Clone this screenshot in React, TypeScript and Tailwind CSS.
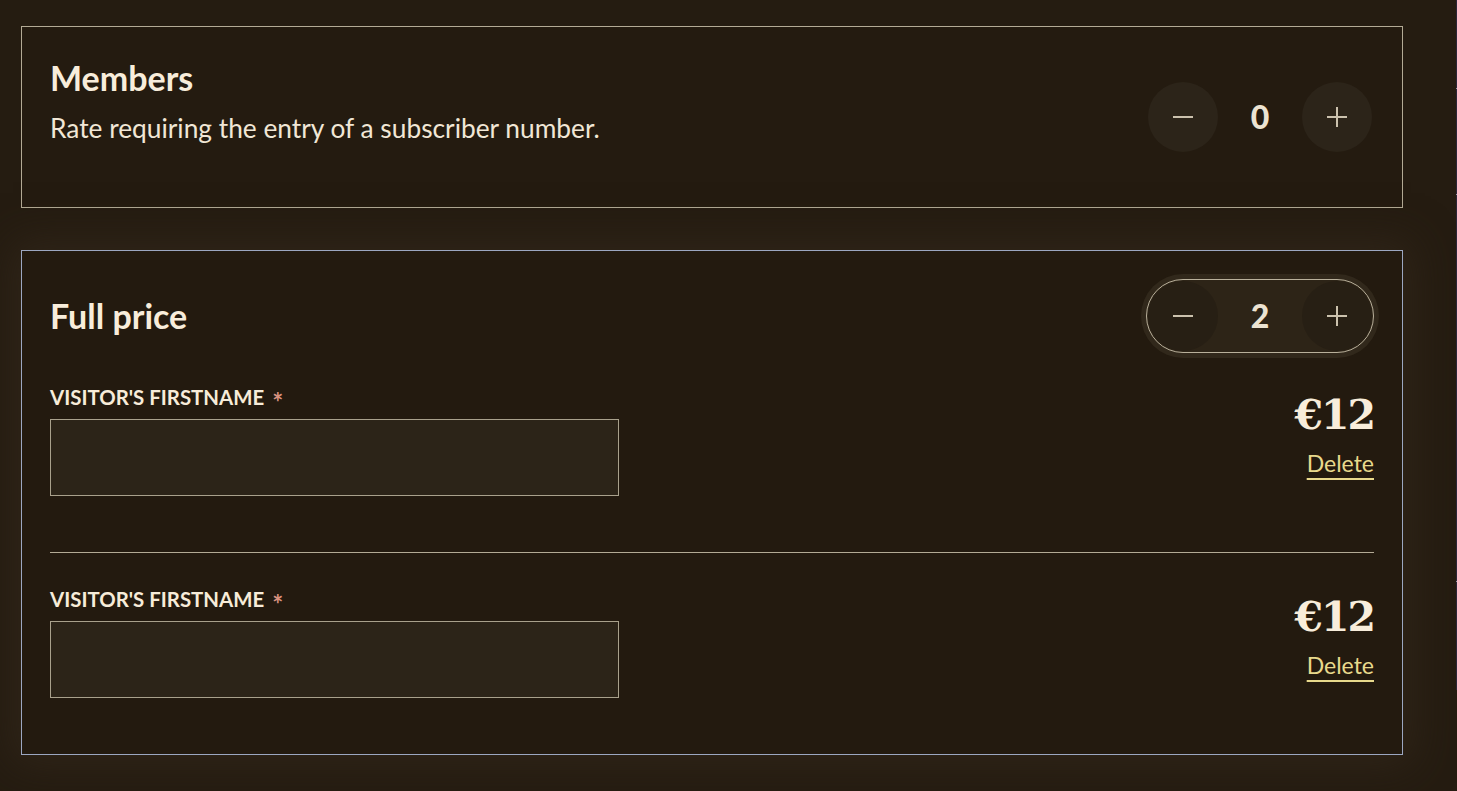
import React from "react";

function Minus() {
  return (
    <svg width="22" height="22" viewBox="0 0 22 22" fill="none">
      <path d="M1 11h20" stroke="#cbc1ad" strokeWidth="2" />
    </svg>
  );
}
function Plus() {
  return (
    <svg width="22" height="22" viewBox="0 0 22 22" fill="none">
      <path d="M1 11h20M11 1v20" stroke="#cbc1ad" strokeWidth="2" />
    </svg>
  );
}

function Stepper({ value, active }: { value: number; active?: boolean }) {
  return (
    <div
      className={
        active
          ? "flex items-center rounded-full border border-[#b9b09b] bg-[#2d2417] p-px shadow-[0_0_0_5px_#31281b]"
          : "flex items-center rounded-full border border-transparent p-px"
      }
    >
      <div
        className={
          active
            ? "flex h-[70px] w-[70px] items-center justify-center rounded-full bg-[#271f14]"
            : "flex h-[70px] w-[70px] items-center justify-center rounded-full bg-[#2c2419]"
        }
      >
        <Minus />
      </div>
      <div className="flex w-[84px] justify-center text-[32px] font-black leading-none text-[#ece3d2]">
        {value}
      </div>
      <div
        className={
          active
            ? "flex h-[70px] w-[70px] items-center justify-center rounded-full bg-[#271f14]"
            : "flex h-[70px] w-[70px] items-center justify-center rounded-full bg-[#2c2419]"
        }
      >
        <Plus />
      </div>
    </div>
  );
}

function VisitorRow({ first }: { first?: boolean }) {
  return (
    <div
      className={
        first
          ? "flex justify-between pt-[32px] pb-[56px]"
          : "flex justify-between border-t border-[#b3aa95] pt-[34px] pb-[56px]"
      }
    >
      <div className="flex flex-col">
        <div className="flex h-[24px] items-start text-[20.4px] font-bold leading-[24px] text-[#f7ecd9]">
          VISITOR'S FIRSTNAME
          <span className="ml-[8px] h-[24px] text-[26px] leading-[34px] text-[#d9917f]">*</span>
        </div>
        <div className="mt-[10px] h-[77px] w-[569px] border border-[#a9a18c] bg-[#2c2418]" />
      </div>
      <div className="flex flex-col items-end pt-[6px]">
        <div className="font-['DejaVu_Serif',serif] text-[41px] font-bold leading-[48px] tracking-[-2px] text-[#f8eddb]">
          €12
        </div>
        <div className="mt-[10px] text-[23px] leading-[28px] text-[#e8d98c] underline decoration-[2px] underline-offset-[6px]">
          Delete
        </div>
      </div>
    </div>
  );
}

export default function App() {
  return (
    <div className="flex h-[791px] w-full overflow-hidden bg-[#251c11] font-['Lato',sans-serif]">
      <div className="flex w-[1403px] flex-col pl-[21px] pt-[26px]">
        <div className="flex h-[182px] items-center justify-between border border-[#b3aa95] bg-[#241b10] pl-[28px] pr-[28px]">
          <div className="flex flex-col self-start pt-[31px]">
            <div className="text-[34px] font-bold leading-[40px] text-[#f8eddb]">Members</div>
            <div className="mt-[14px] text-[26.3px] leading-[32px] text-[#f1e7d6]">
              Rate requiring the entry of a subscriber number.
            </div>
          </div>
          <Stepper value={0} />
        </div>
        <div className="mt-[42px] flex flex-col border border-[#9ca7c1] bg-[#231a0f] px-[28px] pt-[28px] shadow-[0_0_40px_8px_rgba(52,42,28,0.7)]">
          <div className="flex items-center justify-between">
            <div className="text-[34px] font-bold leading-[40px] text-[#f8eddb]">Full price</div>
            <Stepper value={2} active />
          </div>
          <VisitorRow first />
          <VisitorRow />
        </div>
      </div>
      <div className="flex-1" />
      <div className="flex h-[690px] w-px flex-col bg-[#2b2638]">
        <div className="mt-[88px] h-px w-px bg-[#9a96a8]" />
        <div className="mt-[105px] h-px w-px bg-[#9a96a8]" />
        <div className="mt-[386px] h-px w-px bg-[#9a96a8]" />
      </div>
    </div>
  );
}
